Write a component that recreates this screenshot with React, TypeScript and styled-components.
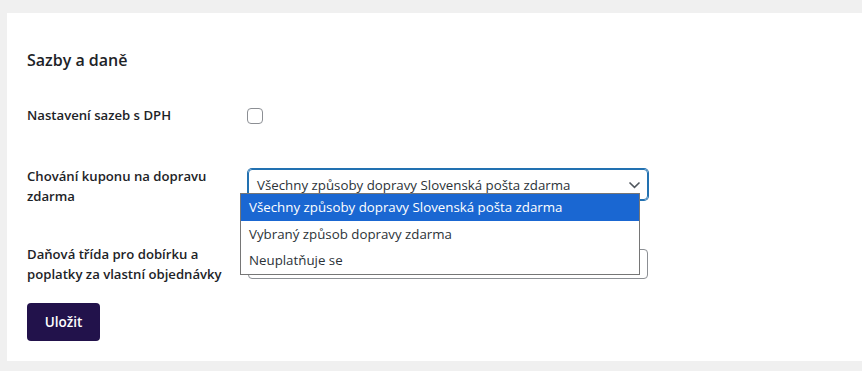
import React from 'react';
import styled, { createGlobalStyle } from 'styled-components';

const GlobalStyle = createGlobalStyle`
  html, body {
    margin: 0;
    padding: 0;
    background: #f0f0f0;
    font-family: "Open Sans", "Noto Sans", sans-serif;
    color: #1d2327;
  }
`;

const Panel = styled.div`
  background: #fff;
  margin: 13px 0 10px 7px;
  padding: 35px 20px 20px 20px;
`;

const Heading = styled.h2`
  margin: 0;
  font-size: 16px;
  line-height: 24px;
  font-weight: 600;
  color: #1d2327;
`;

const Row = styled.div<{ $top: number }>`
  display: grid;
  grid-template-columns: 220px 400px;
  align-items: start;
  margin-top: ${p => p.$top}px;
`;

const Label = styled.label`
  font-size: 13.15px;
  line-height: 20px;
  font-weight: 600;
  color: #1d2327;
`;

const Checkbox = styled.span`
  display: block;
  width: 14px;
  height: 14px;
  margin-top: 3px;
  border: 1px solid #8c8f94;
  border-radius: 4px;
`;

const Field = styled.div<{ $offset: number }>`
  position: relative;
  margin-top: ${p => p.$offset}px;
  margin-left: 1px;
`;

const Select = styled.div<{ $focused?: boolean }>`
  box-sizing: border-box;
  display: flex;
  align-items: center;
  justify-content: space-between;
  width: 400px;
  height: ${p => (p.$focused ? 31 : 30)}px;
  padding: 0 6px 0 8px;
  border: 1px solid ${p => (p.$focused ? '#2271b1' : '#8c8f94')};
  box-shadow: ${p => (p.$focused ? '0 0 0 1px #2271b1' : 'none')};
  border-radius: 4px;
  font-size: 13.3px;
  color: #2c3338;
`;

const Chevron = styled.svg`
  width: 13px;
  height: 8px;
`;

const Menu = styled.ul`
  position: absolute;
  left: -8px;
  top: 24px;
  box-sizing: border-box;
  width: 400px;
  margin: 0;
  padding: 0;
  list-style: none;
  background: #fff;
  border: 1px solid #767676;
  z-index: 2;
`;

const Option = styled.li<{ $active?: boolean }>`
  height: 26.7px;
  line-height: 26px;
  padding-left: 8px;
  font-size: 13.3px;
  background: ${p => (p.$active ? '#1a67d2' : '#fff')};
  color: ${p => (p.$active ? '#fff' : '#2c3338')};
`;

const SaveButton = styled.button`
  display: block;
  margin-top: 19px;
  width: 73px;
  height: 38px;
  border: none;
  border-radius: 4px;
  background: #22124b;
  color: #fff;
  font-family: inherit;
  font-size: 13.5px;
  font-weight: 600;
`;

const options = [
  'Všechny způsoby dopravy Slovenská pošta zdarma',
  'Vybraný způsob dopravy zdarma',
  'Neuplatňuje se',
];

export default function App() {
  return (
    <>
      <GlobalStyle />
      <Panel>
        <Heading>Sazby a daně</Heading>

        <Row $top={33}>
          <Label>Nastavení sazeb s DPH</Label>
          <Checkbox />
        </Row>

        <Row $top={41}>
          <Label>
            Chování kuponu na dopravu
            <br />
            zdarma
          </Label>
          <Field $offset={3}>
            <Select $focused>
              <span>{options[0]}</span>
              <Chevron viewBox="0 0 13 8">
                <path d="M1.5 1.5 L6.5 6.3 L11.5 1.5" fill="none" stroke="#50575e" strokeWidth="1.6" />
              </Chevron>
            </Select>
            <Menu>
              {options.map((o, i) => (
                <Option key={o} $active={i === 0}>
                  {o}
                </Option>
              ))}
            </Menu>
          </Field>
        </Row>

        <Row $top={38}>
          <Label>
            Daňová třída pro dobírku a
            <br />
            poplatky za vlastní objednávky
          </Label>
          <Field $offset={5}>
            <Select />
          </Field>
        </Row>

        <SaveButton>Uložit</SaveButton>
      </Panel>
    </>
  );
}
